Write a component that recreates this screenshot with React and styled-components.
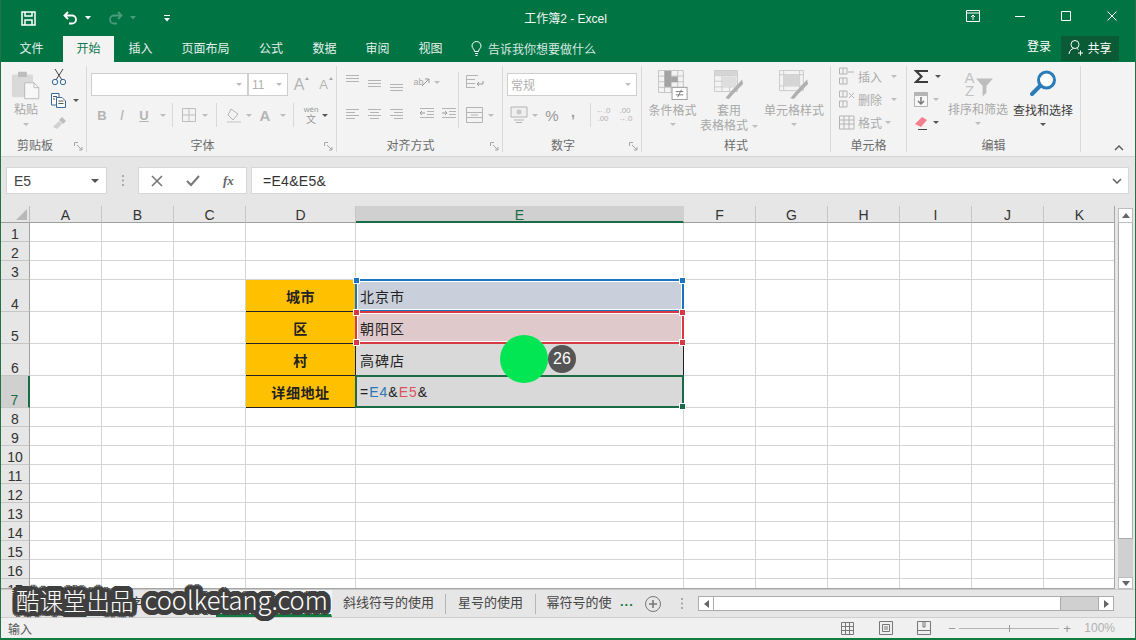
import React from 'react';
import styled, { createGlobalStyle } from 'styled-components';

const GlobalStyle = createGlobalStyle`
  html, body { margin: 0; padding: 0; background: #e6e6e6; }
  body { font-family: "Liberation Sans", "Noto Sans CJK SC", sans-serif; overflow: hidden; }
`;

const Win = styled.div`
  position: relative;
  width: 1136px;
  height: 640px;
  overflow: hidden;
  display: flex;
  flex-direction: column;
  box-sizing: border-box;
  border-left: 1px solid #217346;
  border-right: 1px solid #217346;
  border-bottom: 2px solid #107c41;
  background: #e6e6e6;
  color: #333;
`;

const Ico = styled.svg`
  display: block;
  flex: none;
  margin-left: ${(p) => p.$ml || 0}px;
  margin-top: ${(p) => p.$mt || 0}px;
  opacity: ${(p) => (p.$dim ? 0.28 : 1)};
`;

/* title bar */
const TitleBar = styled.div`
  height: 36px;
  margin: 0 -1px;
  background: #017444;
  display: flex;
  align-items: center;
  color: #fff;
  flex: none;
  position: relative;
`;
const Quick = styled.div`
  width: 480px;
  display: flex;
  align-items: center;
  padding-left: 21px;
  box-sizing: border-box;
`;
const Title = styled.div`
  width: 171px;
  text-align: center;
  font-size: 12px;
  padding-bottom: 2px;
  color: #f2f8f5;
`;
const WinBtns = styled.div`
  margin-left: auto;
  display: flex;
  align-items: center;
  padding: 0 19px 4px 0;
`;

/* tabs */
const TabBar = styled.div`
  height: 26px;
  margin: 0 -1px;
  background: #017444;
  display: flex;
  align-items: stretch;
  flex: none;
  font-size: 12px;
  color: #e6f1ec;
`;
const Tab = styled.div`
  width: ${(p) => p.$w}px;
  display: flex;
  align-items: center;
  justify-content: center;
  padding-bottom: 3px;
  background: ${(p) => (p.$on ? '#f3f3f3' : 'transparent')};
  color: ${(p) => (p.$on ? '#0b7a4b' : 'inherit')};
`;
const TellMe = styled.div`
  display: flex;
  align-items: center;
  gap: 6px;
  margin-left: 14px;
  padding-bottom: 2px;
  color: #d6e9e0;
  font-size: 12px;
`;
const Account = styled.div`
  margin-left: auto;
  display: flex;
  align-items: flex-start;
  color: #fff;
  padding-right: 17px;
`;
const Login = styled.span`
  line-height: 22px;
`;
const Share = styled.div`
  width: 58px;
  height: 25px;
  margin-left: 10px;
  padding-bottom: 3px;
  box-sizing: border-box;
  background: #0a5a36;
  display: flex;
  align-items: center;
  justify-content: center;
  gap: 3px;
`;

/* ribbon */
const Ribbon = styled.div`
  height: 94px;
  flex: none;
  background: #f3f3f3;
  border-bottom: 1px solid #d4d4d4;
  display: flex;
  position: relative;
  padding-left: 1px;
`;
const Group = styled.div`
  width: ${(p) => p.$w}px;
  flex: none;
  box-sizing: border-box;
  border-right: 1px solid #d9d9d9;
  margin: 4px 0;
  display: flex;
  flex-direction: column;
  position: relative;
`;
const GroupBody = styled.div`
  flex: 1;
  display: flex;
  min-height: 0;
`;
const GroupLabel = styled.div`
  height: 15px;
  text-align: center;
  font-size: 12px;
  color: #6b6b6b;
  line-height: 18px;
  padding-right: ${(p) => (p.$launch ? 18 : 0)}px;
  flex: none;
`;
const Launcher = styled.svg`
  position: absolute;
  right: 3px;
  bottom: 1px;
`;
const Stack = styled.div`
  display: flex;
  flex-direction: column;
  gap: ${(p) => p.$gap || 0}px;
  padding-top: ${(p) => p.$pt || 0}px;
  padding-left: ${(p) => p.$pl || 0}px;
  margin-left: ${(p) => p.$ml || 0}px;
  width: ${(p) => (p.$w ? p.$w + 'px' : 'auto')};
  align-items: ${(p) => (p.$center ? 'center' : 'flex-start')};
  flex: none;
  box-sizing: content-box;
`;
const Row = styled.div`
  display: flex;
  align-items: center;
  gap: ${(p) => p.$gap || 0}px;
  height: ${(p) => (p.$h ? p.$h + 'px' : 'auto')};
  margin-left: ${(p) => p.$ml || 0}px;
`;
const Combo = styled.div`
  box-sizing: border-box;
  width: ${(p) => p.$w}px;
  height: 23px;
  background: #fff;
  border: 1px solid #cfcfcf;
  display: flex;
  align-items: center;
  justify-content: space-between;
  padding: 0 5px 0 3px;
  font-size: 12px;
  color: #b0b0b0;
  flex: none;
`;
const Caret = styled.span`
  width: 0;
  height: 0;
  display: inline-block;
  flex: none;
  border-left: ${(p) => p.$s || 3}px solid transparent;
  border-right: ${(p) => p.$s || 3}px solid transparent;
  border-top: ${(p) => p.$s || 3}px solid ${(p) => (p.$dark ? '#555' : '#bdbdbd')};
  margin-left: ${(p) => p.$ml || 0}px;
  margin-top: ${(p) => p.$mt || 0}px;
`;
const UpMark = styled.span`
  width: 0;
  height: 0;
  flex: none;
  align-self: flex-start;
  margin-top: 4px;
  border-left: 2px solid transparent;
  border-right: 2px solid transparent;
  border-bottom: 3px solid #a8a8a8;
`;
const Sep = styled.span`
  width: 1px;
  height: ${(p) => p.$h || 24}px;
  background: #d9d9d9;
  margin-left: ${(p) => p.$m || 0}px;
  margin-right: ${(p) => p.$r ?? p.$m ?? 0}px;
  margin-top: ${(p) => p.$mt || 0}px;
  flex: none;
`;
const BigLabel = styled.div`
  font-size: 12px;
  line-height: 15px;
  margin-top: ${(p) => p.$mt || 0}px;
  color: ${(p) => (p.$dark ? '#3c3c3c' : '#a8a8a8')};
  text-align: center;
  white-space: nowrap;
`;
const SmallLabel = styled.span`
  font-size: 12px;
  color: #ababab;
  margin: 0 ${(p) => p.$mr || 0}px 0 3px;
  white-space: nowrap;
`;
const Glyph = styled.span`
  font-family: ${(p) => p.$font || '"Liberation Sans", sans-serif'};
  font-size: ${(p) => p.$s || 13}px;
  font-weight: ${(p) => (p.$b ? 700 : 400)};
  font-style: ${(p) => (p.$i ? 'italic' : 'normal')};
  text-decoration: ${(p) => (p.$u ? 'underline' : 'none')};
  color: ${(p) => p.$c || '#b4b4b4'};
  width: ${(p) => (p.$w ? p.$w + 'px' : 'auto')};
  margin-left: ${(p) => p.$ml || 0}px;
  margin-top: ${(p) => p.$mt || 0}px;
  text-align: center;
  line-height: ${(p) => (p.$lh ? p.$lh + 'px' : 1)};
  display: inline-block;
  flex: none;
`;
const SortIcon = styled.div`
  display: flex;
  align-items: flex-end;
  height: 26px;
`;
const SortLetters = styled.div`
  display: flex;
  flex-direction: column;
  width: 13px;
`;
const Collapse = styled.svg`
  position: absolute;
  right: 11px;
  bottom: 5px;
`;

/* formula bar */
const FormulaBar = styled.div`
  height: 49px;
  flex: none;
  box-sizing: border-box;
  padding: 10px 6px 12px 5px;
  display: flex;
  align-items: stretch;
  background: #e6e6e6;
`;
const NameBox = styled.div`
  width: 101px;
  background: #fff;
  border: 1px solid #d6d6d6;
  box-sizing: border-box;
  display: flex;
  align-items: center;
  justify-content: space-between;
  padding: 0 7px;
  font-size: 14px;
  color: #444;
`;
const Grip = styled.div`
  width: 31px;
  display: flex;
  justify-content: center;
  align-items: center;
`;
const FxBtns = styled.div`
  width: 109px;
  box-sizing: border-box;
  background: #fff;
  border: 1px solid #d6d6d6;
  display: flex;
  align-items: center;
  gap: 23px;
  padding-left: 12px;
`;
const FormulaInput = styled.div`
  flex: 1;
  margin-left: 4px;
  background: #fff;
  border: 1px solid #d6d6d6;
  box-sizing: border-box;
  display: flex;
  align-items: center;
  justify-content: space-between;
  padding: 0 6px 0 11px;
  font-size: 14px;
  letter-spacing: 0.3px;
  color: #333;
`;

/* sheet */
const SheetArea = styled.div`
  flex: 1;
  min-height: 0;
  display: flex;
  background: #e6e6e6;
  overflow: hidden;
`;
const Grid = styled.div`
  display: grid;
  grid-template-columns: 29px 72px 72px 72px 110px 328px repeat(6, 72px);
  grid-template-rows: 17px 19px 19px 19px 32px 32px 32px 32px repeat(10, 19px);
  box-sizing: border-box;
  width: 1114px;
  height: 383px;
  overflow: hidden;
  flex: none;
  border-right: 1px solid #a6a6a6;
  border-bottom: 1px solid #a6a6a6;
`;
const Corner = styled.div`
  background: #e6e6e6;
  border-right: 1px solid #bdbdbd;
  border-bottom: 1px solid #9f9f9f;
  position: relative;
  &::after {
    content: '';
    position: absolute;
    right: 2px;
    bottom: 2px;
    border-left: 11px solid transparent;
    border-bottom: 11px solid #b9b9b9;
  }
`;
const ColHead = styled.div`
  background: ${(p) => (p.$on ? '#d0d0d0' : '#e6e6e6')};
  border-right: 1px solid ${(p) => (p.$on ? '#d0d0d0' : '#c6c6c6')};
  border-bottom: ${(p) => (p.$on ? '2px solid #1c6b47' : '1px solid #9f9f9f')};
  font-size: 14px;
  color: ${(p) => (p.$on ? '#1c6b47' : '#333')};
  text-align: center;
  line-height: 19px;
  box-sizing: border-box;
`;
const RowHead = styled.div`
  background: ${(p) => (p.$on ? '#d0d0d0' : '#e6e6e6')};
  border-right: ${(p) => (p.$on ? '2px solid #1c6b47' : '1px solid #9f9f9f')};
  border-bottom: 1px solid #c6c6c6;
  font-size: 14px;
  color: ${(p) => (p.$on ? '#1c6b47' : '#333')};
  display: flex;
  align-items: flex-end;
  justify-content: center;
  box-sizing: border-box;
  line-height: 14px;
`;
const Cell = styled.div`
  background: ${(p) => p.$bg || '#fff'};
  border-right: 1px solid ${(p) => p.$line || '#d4d4d4'};
  border-bottom: 1px solid ${(p) => p.$line || '#d4d4d4'};
  box-sizing: border-box;
  position: relative;
  font-size: 14px;
  color: #222;
  display: flex;
  align-items: center;
  justify-content: ${(p) => (p.$center ? 'center' : 'flex-start')};
  font-weight: ${(p) => (p.$bold ? 700 : 400)};
  padding-left: ${(p) => (p.$center ? 0 : 4)}px;
  padding-top: 1px;
  letter-spacing: ${(p) => (p.$center ? '0.6px' : '1px')};
  white-space: nowrap;
`;
const RefFrame = styled.div`
  position: absolute;
  left: -1px;
  top: -1px;
  right: -1px;
  bottom: -1px;
  border: 2px solid ${(p) => p.$c};
  box-shadow: ${(p) => (p.$inner ? 'inset 0 0 0 1px #fff' : 'none')};
  pointer-events: none;
  z-index: ${(p) => p.$z || 1};
`;
const Handle = styled.span`
  position: absolute;
  width: 5px;
  height: 5px;
  background: ${(p) => p.$c};
  border: 1px solid #fff;
  ${(p) => (p.$x === 'l' ? 'left: -4px;' : 'right: -4px;')}
  ${(p) => (p.$y === 't' ? 'top: -4px;' : 'bottom: -4px;')}
`;
const BlueTxt = styled.span`color: #2e75b6;`;
const RedTxt = styled.span`color: #d9535f;`;

const VScroll = styled.div`
  width: 15px;
  margin: 2px 0 0 3px;
  height: 381px;
  display: flex;
  flex-direction: column;
  flex: none;
  background: #d0d0d0;
`;
const ScrollBtn = styled.div`
  height: ${(p) => p.$h || 15}px;
  background: #fff;
  border: 1px solid #bdbdbd;
  box-sizing: border-box;
  display: flex;
  align-items: center;
  justify-content: center;
  flex: none;
`;
const VThumb = styled.div`
  height: 316px;
  flex: none;
  background: #fff;
  border: 1px solid #ababab;
  border-top: none;
  box-sizing: border-box;
`;
const VTrack = styled.div`
  flex: 1;
`;
const Tri = styled.span`
  width: 0;
  height: 0;
  display: block;
  ${(p) => p.$d === 'up' && 'border-left: 4px solid transparent; border-right: 4px solid transparent; border-bottom: 5px solid #666;'}
  ${(p) => p.$d === 'down' && 'border-left: 4px solid transparent; border-right: 4px solid transparent; border-top: 5px solid #666;'}
  ${(p) => p.$d === 'left' && 'border-top: 4px solid transparent; border-bottom: 4px solid transparent; border-right: 5px solid #666;'}
  ${(p) => p.$d === 'right' && 'border-top: 4px solid transparent; border-bottom: 4px solid transparent; border-left: 5px solid #666;'}
`;
const ClickDot = styled.div`
  position: absolute;
  left: 499px;
  top: 335px;
  width: 48px;
  height: 48px;
  border-radius: 50%;
  background: #02e654;
  z-index: 5;
`;
const StepBadge = styled.div`
  position: absolute;
  left: 547px;
  top: 345px;
  width: 28px;
  height: 28px;
  border-radius: 50%;
  background: #555;
  color: #fff;
  font-size: 16px;
  display: flex;
  align-items: center;
  justify-content: center;
  z-index: 5;
`;

/* sheet tabs */
const TabsRow = styled.div`
  height: 28px;
  flex: none;
  border-top: 1px solid #c9c9c9;
  display: flex;
  align-items: center;
  background: #e6e6e6;
  box-sizing: border-box;
  font-size: 13px;
  color: #444;
`;
const SheetTab = styled.div`
  height: ${(p) => (p.$on ? '100%' : '20px')};
  box-sizing: border-box;
  width: ${(p) => p.$w}px;
  flex: none;
  display: flex;
  align-items: center;
  justify-content: center;
  padding-bottom: 4px;
  white-space: nowrap;
  overflow: hidden;
  border-right: 1px solid ${(p) => (p.$noline || p.$on ? 'transparent' : '#b5b5b5')};
  ${(p) => p.$on && 'border-bottom: 3px solid #107c41; background: #f3f3f3; color: #107c41;'}
`;
const More = styled.span`
  color: #107c41;
  font-weight: 700;
  margin: 0 0 4px -3px;
  letter-spacing: 1px;
  width: 20px;
  line-height: 12px;
  flex: none;
`;
const HScroll = styled.div`
  width: 416px;
  height: 15px;
  margin-left: 15px;
  display: flex;
  flex: none;
  box-sizing: border-box;
  border: 1px solid #ababab;
  background: #d0d0d0;
`;
const HBtn = styled.div`
  width: 14px;
  background: #fff;
  display: flex;
  align-items: center;
  justify-content: center;
  flex: none;
  ${(p) => p.$l && 'border-left: 1px solid #ababab; margin-left: auto;'}
  ${(p) => p.$r && 'border-right: 1px solid #ababab;'}
`;
const HThumb = styled.div`
  width: 346px;
  background: #fff;
  border-right: 1px solid #ababab;
`;

/* status bar */
const StatusBar = styled.div`
  height: 21px;
  flex: none;
  border-top: 1px solid #cfcfcf;
  display: flex;
  align-items: center;
  box-sizing: border-box;
  background: #f0f0f0;
  padding-left: 7px;
  font-size: 12px;
  color: #555;
`;
const StatusRight = styled.div`
  margin-left: auto;
  display: flex;
  align-items: center;
  padding-right: 20px;
`;
const Slider = styled.div`
  width: 100px;
  height: 1px;
  background: #b5b5b5;
  position: relative;
  margin: 0 4px;
  &::after {
    content: '';
    position: absolute;
    left: 50%;
    top: -3px;
    width: 1px;
    height: 7px;
    background: #999;
  }
`;
const ZoomPct = styled.span`
  font-size: 12px;
  color: #b0b0b0;
  margin-left: 14px;
`;

// rounded dark halo round the watermark letters
const halo = [2, 3.5, 5]
  .flatMap((r) => Array.from({ length: 20 }, (_, i) => {
    const a = (i / 20) * Math.PI * 2;
    return `${(Math.cos(a) * r).toFixed(2)}px ${(Math.sin(a) * r).toFixed(2)}px 0 #3f3f3f`;
  }))
  .join(', ');

const Watermark = styled.div`
  position: absolute;
  left: 15px;
  top: 583px;
  z-index: 9;
  display: flex;
  align-items: baseline;
  gap: 11px;
  line-height: 32px;
  white-space: nowrap;
  font-family: "Noto Sans CJK SC", "Liberation Sans", sans-serif;
  font-weight: 300;
  color: #fff;
  text-shadow: ${halo};
`;
const WatermarkCn = styled.span`
  font-size: 23.5px;
`;
const WatermarkEn = styled.span`
  font-size: 25.5px;
`;

/* icons */
const I = ({ w = 16, h = 16, children, c = '#b4b4b4', sw = 1, ml, mt }) => (
  <Ico $ml={ml} $mt={mt} width={w} height={h} viewBox={`0 0 ${w} ${h}`} fill="none" stroke={c} strokeWidth={sw}>{children}</Ico>
);

const Lines = ({ ys, xs, h = 16 }) => (
  <I w={16} h={h}>
    {ys.map((y, i) => <path key={i} d={`M${xs[i][0]} ${y}H${xs[i][1]}`} />)}
  </I>
);
const AL = [[1, 14], [1, 14], [1, 14]];
const LN = ({ k }) => {
  if (k === 'top') return <Lines h={20} ys={[3.5, 6.5, 9.5]} xs={AL} />;
  if (k === 'mid') return <Lines h={20} ys={[8.5, 11.5, 14.5]} xs={AL} />;
  if (k === 'bot') return <Lines h={20} ys={[12.5, 15.5, 18.5]} xs={AL} />;
  if (k === 'left') return <Lines ys={[4.5, 7.5, 10.5, 13.5]} xs={[[1, 14], [1, 10], [1, 14], [1, 10]]} />;
  if (k === 'center') return <Lines ys={[4.5, 7.5, 10.5, 13.5]} xs={[[1, 14], [3, 12], [1, 14], [3, 12]]} />;
  return <Lines ys={[4.5, 7.5, 10.5, 13.5]} xs={[[1, 14], [5, 14], [1, 14], [5, 14]]} />;
};
const Indent = ({ flip }) => (
  <I w={16} h={16}>
    <path d="M1 3.5H15M8 6.5H15M8 9.5H15M1 12.5H15" />
    <path d={flip ? 'M1 8H6M4 6L6 8L4 10' : 'M1 8H6M3 6L1 8L3 10'} stroke="#999" />
  </I>
);
const GridIcon = ({ s = 16, c = '#bdbdbd', n = 3, ml }) => {
  const st = (s - 1) / n;
  const d = [];
  for (let i = 0; i <= n; i++) d.push(`M${0.5 + i * st} .5V${s - 0.5}M.5 ${0.5 + i * st}H${s - 0.5}`);
  return <I w={s} h={s} c={c} ml={ml}><path d={d.join('')} /></I>;
};
const Launch = () => (
  <Launcher width="9" height="9" viewBox="0 0 9 9" fill="none" stroke="#a5a5a5">
    <path d="M.5 4V.5H4M3 3L8 8M8 5V8H5" />
  </Launcher>
);
const GripDots = ({ ml }) => (
  <Ico $ml={ml} width="2" height="11" viewBox="0 0 2 11" fill="#aaa"><path d="M0 0H2V2H0ZM0 4.500H2V6.500H0ZM0 9H2V11H0Z" /></Ico>
);
const BrushSvg = ({ children }) => (
  <Ico width="30" height="30" viewBox="0 0 32 32" fill="none" stroke="#c9c9c9">{children}</Ico>
);

const columns = ['A', 'B', 'C', 'D', 'E', 'F', 'G', 'H', 'I', 'J', 'K'];
const rows = Array.from({ length: 17 }, (_, i) => i + 1);

const Frames = {
  4: <RefFrame $c="#1b74bf" $inner><Handle $c="#1b74bf" $x="l" $y="t" /><Handle $c="#1b74bf" $x="r" $y="t" /></RefFrame>,
  5: <RefFrame $c="#d83a43" $z={2} $inner><Handle $c="#d83a43" $x="l" $y="t" /><Handle $c="#d83a43" $x="r" $y="t" /><Handle $c="#d83a43" $x="l" $y="b" /><Handle $c="#d83a43" $x="r" $y="b" /></RefFrame>,
  7: <RefFrame $c="#1c6b47"><Handle $c="#1c6b47" $x="r" $y="b" /></RefFrame>,
};
const tableRows = {
  4: { head: '城市', bg: '#c9d0db', val: '北京市' },
  5: { head: '区', bg: '#e0c9cb', val: '朝阳区' },
  6: { head: '村', bg: '#d9d9d9', val: '高碑店' },
  7: { head: '详细地址', bg: '#d9d9d9', val: <>=<BlueTxt>E4</BlueTxt>&amp;<RedTxt>E5</RedTxt>&amp;</> },
};

function SheetGrid() {
  return (
    <Grid>
      <Corner />
      {columns.map((c) => <ColHead key={c} $on={c === 'E'}>{c}</ColHead>)}
      {rows.map((r) => (
        <React.Fragment key={r}>
          <RowHead $on={r === 7}>{r}</RowHead>
          {columns.map((c) => {
            const t = tableRows[r];
            if (t && c === 'D') return <Cell key={c} $bg="#ffc000" $line="#222" $center $bold>{t.head}</Cell>;
            if (t && c === 'E') return <Cell key={c} $bg={t.bg} $line="#222">{t.val}{Frames[r]}</Cell>;
            return <Cell key={c} />;
          })}
        </React.Fragment>
      ))}
    </Grid>
  );
}

function RibbonBar() {
  return (
    <Ribbon>
      <Group $w={85}>
        <GroupBody>
          <Stack $w={48} $center $pt={4}>
            <Ico width="30" height="30" viewBox="0 0 34 34">
              <rect x="1" y="5" width="24" height="26" rx="2" fill="#d9d9d9" />
              <rect x="8" y="2" width="10" height="6" rx="1" fill="#bdbdbd" />
              <path d="M15.5 14.5H26L31.5 20V32.5H15.5Z" fill="#f7f7f7" stroke="#b5b5b5" />
              <path d="M26 14.5V20H31.5" fill="none" stroke="#b5b5b5" />
            </Ico>
            <BigLabel $mt={3}>粘贴</BigLabel>
            <Caret $mt={5} />
          </Stack>
          <Stack $gap={7} $pt={2} $pl={1}>
            <I w={16} h={18} c="#35689b">
              <path d="M4 1L11 12M12 1L5 12" stroke="#444" />
              <circle cx="4" cy="14" r="2.7" /><circle cx="12" cy="14" r="2.7" />
            </I>
            <Row $gap={6}>
              <I w={16} h={15} c="#35689b">
                <path d="M.5 .5H8V12H.5Z" fill="#fff" /><path d="M5.5 4.5H11L14.5 8V14.5H5.5Z" fill="#fff" />
                <path d="M2 3.5H6M2 6H4M7.5 8H12.5M7.5 10.5H12.5" stroke="#555" />
              </I>
              <Caret $dark />
            </Row>
            <I w={18} h={16}>
              <path d="M11 2L15 6L12 9L8 5Z" fill="#bdbdbd" stroke="none" />
              <path d="M8 6L11 9L6 14L2 12Z" fill="#d0d0d0" stroke="none" />
            </I>
          </Stack>
        </GroupBody>
        <GroupLabel $launch>剪贴板</GroupLabel>
        <Launch />
      </Group>

      <Group $w={250}>
        <GroupBody>
          <Stack $pt={7} $pl={4} $gap={7}>
            <Row>
              <Combo $w={157}><span /><Caret /></Combo>
              <Combo $w={40}>11<Caret /></Combo>
              <Glyph $s={16} $w={12} $ml={5}>A</Glyph>
              <UpMark />
              <Glyph $s={13} $w={11} $ml={9}>A</Glyph>
              <UpMark />
            </Row>
            <Row $h={24}>
              <Glyph $b $w={18} $ml={2}>B</Glyph>
              <Glyph $i $w={22} $s={14}>I</Glyph>
              <Glyph $u $w={22} $b>U</Glyph>
              <Caret $ml={5} />
              <Sep $m={6} />
              <GridIcon s={14} n={2} ml={3} />
              <Caret $ml={6} />
              <Sep $m={8} />
              <I w={20} h={16}><path d="M6 2L13 7L8 13L3 8Z" /><path d="M2 15H16" stroke="#dcdcdc" strokeWidth="2" /></I>
              <Caret $ml={1} />
              <Glyph $b $s={15} $w={26}>A</Glyph>
              <Caret $ml={2} />
              <Sep $m={7} />
              <Stack $center $w={20}>
                <Glyph $s={8} $c="#999">wén</Glyph>
                <Glyph $s={10} $c="#999" $font={'"Noto Sans CJK SC", sans-serif'}>文</Glyph>
              </Stack>
              <Caret $dark $ml={1} />
            </Row>
          </Stack>
        </GroupBody>
        <GroupLabel $launch>字体</GroupLabel>
        <Launch />
      </Group>

      <Group $w={166}>
        <GroupBody>
          <Stack $pt={6} $pl={8} $gap={13}>
            <Row $gap={6} $h={20}>
              <LN k="top" /><LN k="mid" /><LN k="bot" />
              <Row $ml={2}>
                <Glyph $s={9} $w={11} $c="#a8a8a8">ab</Glyph>
                <I w={9} h={16} ml={-3}><path d="M1 12L8 5M4 5H8V9" stroke="#999" /></I>
              </Row>
              <Caret $ml={-2} />
            </Row>
            <Row $gap={6}>
              <LN k="left" /><LN k="center" /><LN k="right" />
              <Ico $ml={2} as="span" />
              <Indent /><Indent flip />
            </Row>
          </Stack>
          <Sep $h={56} $m={1} $r={7} $mt={6} />
          <Stack $pt={8} $gap={14}>
            <I w={18} h={18}><path d="M.5 1.5H12M.5 5.5H9M.5 9.5H9M.5 13.5H9M.5 1.5V14" /><path d="M17 7V10H11M13 8L11 10L13 12" stroke="#999" /></I>
            <Row $gap={4}>
              <I w={18} h={18}><path d="M.5 1.5H16.5V16.5H.5ZM.5 6.5H16.5M.5 11.5H16.5M5 9H12" /></I>
              <Caret />
            </Row>
          </Stack>
        </GroupBody>
        <GroupLabel $launch>对齐方式</GroupLabel>
        <Launch />
      </Group>

      <Group $w={139}>
        <GroupBody>
          <Stack $pt={7} $pl={4} $gap={7}>
            <Combo $w={130}>常规<Caret /></Combo>
            <Row $h={24} $ml={3}>
              <I w={20} h={18}><path d="M1 1H17V11H1Z" fill="#efefef" /><circle cx="9" cy="6" r="2.5" fill="#c8c8c8" stroke="none" /><path d="M4 14H14M6 16.5H12" /></I>
              <Caret $ml={2} />
              <Glyph $s={15} $w={28} $c="#999">%</Glyph>
              <Glyph $s={14} $w={14} $c="#999" $b $mt={-6}>,</Glyph>
              <Sep $m={10} $r={1} />
              <Stack $w={22} $center><Glyph $s={8}>←.0</Glyph><Glyph $s={8}>.00</Glyph></Stack>
              <Stack $w={22} $center><Glyph $s={8}>.00</Glyph><Glyph $s={8}>→.0</Glyph></Stack>
            </Row>
          </Stack>
        </GroupBody>
        <GroupLabel $launch>数字</GroupLabel>
        <Launch />
      </Group>

      <Group $w={189}>
        <GroupBody>
          <Stack $w={55} $ml={3} $center $pt={4}>
            <BrushSvg>
              <g stroke="#c2c2c2">
                <path d="M.5 .5H27V24H.5ZM.5 6.5H27M.5 12.5H27M.5 18.500H27M7 .5V24M14 .5V24M21 .5V24" />
              </g>
              <rect x="7" y="1" width="7" height="17" fill="#a3a3a3" stroke="none" />
              <rect x="14" y="7" width="7" height="6" fill="#a3a3a3" stroke="none" />
              <rect x="15" y="18.5" width="16" height="13" fill="#fff" stroke="#999" />
              <path d="M19 23H27M19 26.500H27M21 29L25 21" stroke="#777" />
            </BrushSvg>
            <BigLabel $mt={4}>条件格式</BigLabel>
            <Caret $mt={4} />
          </Stack>
          <Stack $w={58} $center $pt={4}>
            <BrushSvg>
              <path d="M.5 .5H25V23H.5ZM.5 6H25M.5 12H25M.5 18H25M8.500 .5V23M16.500 .5V23" />
              <rect x="1" y="1" width="24" height="5" fill="#d5d5d5" stroke="none" />
              <rect x="9" y="7" width="15" height="11" fill="#dedede" stroke="none" />
              <path d="M30 10L17 24L12 30L16 31L20 26L31 15Z" fill="#b0b0b0" stroke="none" />
            </BrushSvg>
            <BigLabel $mt={4}>套用</BigLabel>
            <Row><BigLabel>表格格式</BigLabel><Caret $ml={4} /></Row>
          </Stack>
          <Stack $w={60} $ml={6} $center $pt={4}>
            <BrushSvg>
              <path d="M.5 .5H26V22H.5ZM.5 5H26M.5 17H26M5 .5V22M22 .5V22" />
              <rect x="5" y="5" width="17" height="12" fill="#d5d5d5" stroke="none" />
              <path d="M30 10L17 24L12 30L16 31L20 26L31 15Z" fill="#b0b0b0" stroke="none" />
            </BrushSvg>
            <BigLabel $mt={4}>单元格样式</BigLabel>
            <Caret $mt={4} />
          </Stack>
        </GroupBody>
        <GroupLabel>样式</GroupLabel>
      </Group>

      <Group $w={76}>
        <GroupBody>
          <Stack $pt={1} $pl={8} $gap={5}>
            <Row><I w={16} h={18}><path d="M.5 1H8V7H.5ZM.5 11H8V17H.5ZM4 1V7M4 11V17M9 5H15" /></I><SmallLabel $mr={9}>插入</SmallLabel><Caret /></Row>
            <Row><I w={16} h={18}><path d="M.5 1H8V7H.5ZM.5 11H8V17H.5ZM4 1V7M4 11V17M10 3L15 8M15 3L10 8" /></I><SmallLabel $mr={9}>删除</SmallLabel><Caret /></Row>
            <Row><I w={16} h={18}><path d="M.5 3H15V16H.5ZM.5 7H15M.5 11H15M5 3V16M10 3V16" /></I><SmallLabel $mr={3}>格式</SmallLabel><Caret /></Row>
          </Stack>
        </GroupBody>
        <GroupLabel>单元格</GroupLabel>
      </Group>

      <Group $w={174}>
        <GroupBody>
          <Stack $pt={3} $pl={7} $gap={8} $w={35}>
            <Row $gap={6} $h={15}>
              <Ico width="15" height="15" viewBox="0 0 15 15" fill="none" stroke="#3c3c3c" strokeWidth="2.200"><path d="M14 2H2L7.500 7.500L2 13H14" /></Ico>
              <Caret $dark />
            </Row>
            <Row $gap={4} $h={15}>
              <I w={15} h={15}><path d="M.5 .5H13.500V14.500H.5Z" fill="#f7f7f7" /><rect x="1" y="1" width="12" height="3" fill="#b5b5b5" stroke="none" /><path d="M7 5V12M4 9L7 12L10 9" stroke="#777" strokeWidth="1.500" /></I>
              <Caret />
            </Row>
            <Row $gap={4} $h={15}>
              <Ico width="15" height="15" viewBox="0 0 15 15"><path d="M1 9L8 2L13 5L7 12Z" fill="#f47f8e" /><path d="M4 14.500H13" stroke="#444" /></Ico>
              <Caret $dark />
            </Row>
          </Stack>
          <Stack $w={60} $ml={-1} $center $pt={5}>
            <SortIcon>
              <SortLetters>
                <Glyph $s={15} $lh={13} $c="#c2c2c2">A</Glyph>
                <Glyph $s={15} $lh={13} $c="#c2c2c2">Z</Glyph>
              </SortLetters>
              <Ico width="17" height="19" viewBox="0 0 18 19"><path d="M0 0H18L11 8V15L7 19V8Z" fill="#bdbdbd" /></Ico>
            </SortIcon>
            <BigLabel $mt={6}>排序和筛选</BigLabel>
            <Caret $mt={4} />
          </Stack>
          <Stack $w={60} $ml={5} $center $pt={4}>
            <Ico width="28" height="27" viewBox="0 0 28 27" fill="none" stroke="#2a7cb8" strokeWidth="3">
              <circle cx="17.500" cy="10" r="8" fill="#fff" />
              <path d="M11 16L3 24" strokeWidth="4" strokeLinecap="round" />
            </Ico>
            <BigLabel $dark $mt={7}>查找和选择</BigLabel>
            <Caret $dark $mt={4} />
          </Stack>
        </GroupBody>
        <GroupLabel>编辑</GroupLabel>
      </Group>

      <Collapse width="10" height="6" viewBox="0 0 10 6" fill="none" stroke="#555" strokeWidth="1.400"><path d="M1 5L5 1L9 5" /></Collapse>
    </Ribbon>
  );
}

export default function App() {
  return (
    <Win>
      <GlobalStyle />
      <TitleBar>
        <Quick>
          <Ico width="15" height="15" viewBox="0 0 15 15" fill="none" stroke="#fff" strokeWidth="1.500">
            <path d="M1 1H14V14H1Z" /><path d="M4 1V5H11V1M4 14V9H11V14" />
          </Ico>
          <Ico $ml={27} width="15" height="14" viewBox="0 0 15 14" fill="none" stroke="#fff" strokeWidth="1.800">
            <path d="M5 1L1.500 4.500L5 8M2 4.500H9A4 4 0 0 1 9 12.500H6" />
          </Ico>
          <Ico $ml={7} width="6" height="4" viewBox="0 0 6 4" fill="#fff"><path d="M0 0H6L3 3.500Z" /></Ico>
          <Ico $ml={17} $dim width="15" height="14" viewBox="0 0 15 14" fill="none" stroke="#fff" strokeWidth="1.800">
            <path d="M10 1L13.500 4.500L10 8M13 4.500H6A4 4 0 0 0 6 12.500H9" />
          </Ico>
          <Ico $ml={7} $dim width="6" height="4" viewBox="0 0 6 4" fill="#fff"><path d="M0 0H6L3 3.500Z" /></Ico>
          <Ico $ml={28} width="6" height="7" viewBox="0 0 6 7" fill="#fff"><path d="M0 0H6V1H0ZM0 3H6L3 6.500Z" /></Ico>
        </Quick>
        <Title>工作簿2 - Excel</Title>
        <WinBtns>
          <Ico width="14" height="12" viewBox="0 0 14 12" fill="none" stroke="#fff"><path d="M.5 .5H13.500V11.500H.5ZM.5 3H13.500M7 10V5M5 7L7 5L9 7" /></Ico>
          <Ico $ml={35} width="10" height="1" viewBox="0 0 10 1"><path d="M0 .5H10" stroke="#fff" /></Ico>
          <Ico $ml={36} width="10" height="10" viewBox="0 0 10 10" fill="none" stroke="#fff"><path d="M.5 .5H9.500V9.500H.5Z" /></Ico>
          <Ico $ml={36} width="10" height="10" viewBox="0 0 10 10" fill="none" stroke="#fff"><path d="M.5 .5L9.500 9.500M9.500 .5L.5 9.500" /></Ico>
        </WinBtns>
      </TitleBar>
      <TabBar>
        <Tab $w={63}>文件</Tab>
        <Tab $w={51} $on>开始</Tab>
        <Tab $w={53}>插入</Tab>
        <Tab $w={77}>页面布局</Tab>
        <Tab $w={54}>公式</Tab>
        <Tab $w={53}>数据</Tab>
        <Tab $w={53}>审阅</Tab>
        <Tab $w={53}>视图</Tab>
        <TellMe>
          <Ico width="11" height="15" viewBox="0 0 11 15" fill="none" stroke="#fff">
            <path d="M3.500 10.500C3.500 8 1 7.500 1 5A4.500 4.500 0 0 1 10 5C10 7.500 7.500 8 7.500 10.500ZM4 12.500H7M4.500 14.500H6.500" />
          </Ico>
          告诉我你想要做什么
        </TellMe>
        <Account>
          <Login>登录</Login>
          <Share>
            <Ico width="16" height="17" viewBox="0 0 16 17" fill="none" stroke="#fff">
              <circle cx="7" cy="5.500" r="4" /><path d="M1 15C1.500 11.500 3.500 10 5.500 9.500M9 9.500L10.500 10.500M10 14H15M12.500 11.500V16.500" />
            </Ico>
            共享
          </Share>
        </Account>
      </TabBar>
      <RibbonBar />
      <FormulaBar>
        <NameBox>E5<Caret $dark $s={4} /></NameBox>
        <Grip><GripDots /></Grip>
        <FxBtns>
          <Ico width="12" height="12" viewBox="0 0 12 12" fill="none" stroke="#777" strokeWidth="1.600"><path d="M1 1L11 11M11 1L1 11" /></Ico>
          <Ico width="14" height="12" viewBox="0 0 14 12" fill="none" stroke="#777" strokeWidth="2"><path d="M1 6L5 10L13 1" /></Ico>
          <Glyph $i $b $s={13} $c="#666" $font={'"Liberation Serif", serif'}>fx</Glyph>
        </FxBtns>
        <FormulaInput>
          =E4&amp;E5&amp;
          <Ico width="10" height="6" viewBox="0 0 10 6" fill="none" stroke="#666" strokeWidth="1.600"><path d="M1 1L5 5L9 1" /></Ico>
        </FormulaInput>
      </FormulaBar>
      <SheetArea>
        <SheetGrid />
        <VScroll>
          <ScrollBtn><Tri $d="up" /></ScrollBtn>
          <VThumb />
          <VTrack />
          <ScrollBtn $h={12}><Tri $d="down" /></ScrollBtn>
        </VScroll>
      </SheetArea>
      <TabsRow>
        <SheetTab $w={96} />
        <SheetTab $w={119}>连字符的使用</SheetTab>
        <SheetTab $w={116} $on>与符号的使用</SheetTab>
        <SheetTab $w={114}>斜线符号的使用</SheetTab>
        <SheetTab $w={90}>星号的使用</SheetTab>
        <SheetTab $w={87} $noline>幂符号的使</SheetTab>
        <More>...</More>
        <Ico $ml={4} width="18" height="18" viewBox="0 0 18 18" fill="none" stroke="#777"><circle cx="9" cy="9" r="7.500" /><path d="M5 9H13M9 5V13" strokeWidth="1.600" /></Ico>
        <GripDots ml={19} />
        <HScroll>
          <HBtn $r><Tri $d="left" /></HBtn>
          <HThumb />
          <HBtn $l><Tri $d="right" /></HBtn>
        </HScroll>
      </TabsRow>
      <StatusBar>
        输入
        <StatusRight>
          <GridIcon s={13} c="#777" />
          <Ico $ml={25} width="14" height="14" viewBox="0 0 14 14" fill="none" stroke="#777"><path d="M.5 .5H13.500V13.500H.5ZM3.500 3.500H10.500V10.500H3.500ZM5 6H9M5 8H9" /></Ico>
          <Ico $ml={24} width="14" height="14" viewBox="0 0 14 14" fill="none" stroke="#777"><path d="M.5 .5H13.500V13.500H.5ZM.5 9.500H13.500M6 .5V6H8V.5" /></Ico>
          <Glyph $s={13} $w={7} $c="#999" $ml={17}>−</Glyph>
          <Slider />
          <Glyph $s={13} $w={7} $c="#999">+</Glyph>
          <ZoomPct>100%</ZoomPct>
        </StatusRight>
      </StatusBar>
      <ClickDot />
      <StepBadge>26</StepBadge>
      <Watermark>
        <WatermarkCn>酷课堂出品</WatermarkCn>
        <WatermarkEn>coolketang.com</WatermarkEn>
      </Watermark>
    </Win>
  );
}
